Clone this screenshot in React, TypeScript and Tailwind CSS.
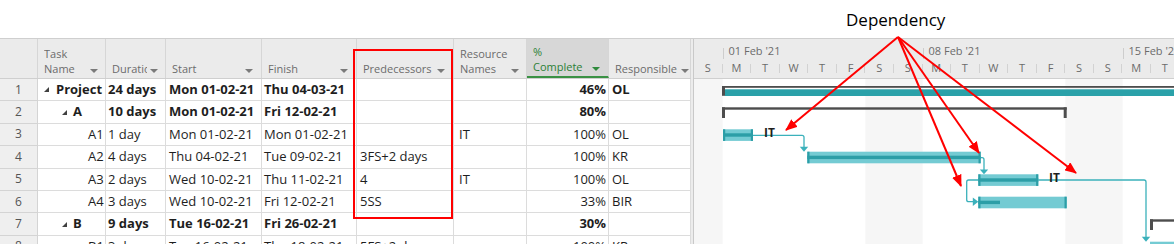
const cols = "grid grid-cols-[38px_68px_60px_96px_95px_97px_73px_82px_82px]";

type Task = {
  n: number;
  name: string;
  level: 0 | 1 | 2;
  dur: string;
  start: string;
  finish: string;
  pred: string;
  res: string;
  pct: string;
  resp: string;
};

const tasks: Task[] = [
  { n: 1, name: "Project", level: 0, dur: "24 days", start: "Mon 01-02-21", finish: "Thu 04-03-21", pred: "", res: "", pct: "46%", resp: "OL" },
  { n: 2, name: "A", level: 1, dur: "10 days", start: "Mon 01-02-21", finish: "Fri 12-02-21", pred: "", res: "", pct: "80%", resp: "" },
  { n: 3, name: "A1", level: 2, dur: "1 day", start: "Mon 01-02-21", finish: "Mon 01-02-21", pred: "", res: "IT", pct: "100%", resp: "OL" },
  { n: 4, name: "A2", level: 2, dur: "4 days", start: "Thu 04-02-21", finish: "Tue 09-02-21", pred: "3FS+2 days", res: "", pct: "100%", resp: "KR" },
  { n: 5, name: "A3", level: 2, dur: "2 days", start: "Wed 10-02-21", finish: "Thu 11-02-21", pred: "4", res: "IT", pct: "100%", resp: "OL" },
  { n: 6, name: "A4", level: 2, dur: "3 days", start: "Wed 10-02-21", finish: "Fri 12-02-21", pred: "5SS", res: "", pct: "33%", resp: "BIR" },
  { n: 7, name: "B", level: 1, dur: "9 days", start: "Tue 16-02-21", finish: "Fri 26-02-21", pred: "", res: "", pct: "30%", resp: "" },
  { n: 8, name: "B1", level: 2, dur: "3 days", start: "Tue 16-02-21", finish: "Thu 18-02-21", pred: "5FS+2 days", res: "", pct: "100%", resp: "KR" },
];

const days = ["S", "M", "T", "W", "T", "F", "S", "S", "M", "T", "W", "T", "F", "S", "S", "M", "T"];

function Caret({ green }: { green?: boolean }) {
  return (
    <svg width="8" height="4" viewBox="0 0 8 4" className="mb-[5px] shrink-0">
      <path d="M0 0H8L4 4Z" fill={green ? "#2f8a3c" : "#7a7a7a"} />
    </svg>
  );
}

function HeadCell({
  lines,
  active,
  mr = "mr-[7px]",
  gap = "mr-[3px]",
}: {
  lines: string[];
  active?: boolean;
  mr?: string;
  gap?: string;
}) {
  return (
    <div
      className={
        active
          ? "flex items-end border-r border-b-2 border-r-[#d6d6d6] border-b-[#3a9144] bg-[#d7d7d7] pl-[6px] text-[#2b8036]"
          : "flex items-end border-r border-[#d6d6d6] pl-[6px] text-[#6b6b6b]"
      }
    >
      <div className={`min-w-0 flex-1 overflow-hidden whitespace-nowrap pb-[2px] leading-[15px] ${gap}`}>
        {lines.map((l) => (
          <div key={l}>{l}</div>
        ))}
      </div>
      <div className={mr}>
        <Caret green={active} />
      </div>
    </div>
  );
}

function Expander() {
  return (
    <svg width="5" height="5" viewBox="0 0 5 5" className="shrink-0">
      <path d="M5 0V5H0Z" fill="#404040" />
    </svg>
  );
}

function TaskRow({ t }: { t: Task }) {
  const bold = t.level < 2;
  const cell = "flex items-center overflow-hidden whitespace-nowrap border-r border-b border-[#dcdcdc]";
  return (
    <div className={`${cols} h-[22.4px] text-[13px] text-[#1e1e1e] ${bold ? "font-bold" : ""}`}>
      <div className="flex items-center justify-center border-r border-b border-[#d4d4d4] bg-[#efefef] text-[12px] font-normal text-[#555]">
        {t.n}
      </div>
      <div className={`${cell} ${t.level === 0 ? "gap-[7px] pl-[6px]" : t.level === 1 ? "gap-[6px] pl-[24px]" : "pl-[50px]"}`}>
        {t.level < 2 && <Expander />}
        <span>{t.name}</span>
      </div>
      <div className={`${cell} pl-[2px]`}>{t.dur}</div>
      <div className={`${cell} pl-[3px]`}>{t.start}</div>
      <div className={`${cell} pl-[2px]`}>{t.finish}</div>
      <div className={`${cell} pl-[3px]`}>{t.pred}</div>
      <div className={`${cell} pl-[5px]`}>{t.res}</div>
      <div className={`${cell} justify-end pr-[2px]`}>{t.pct}</div>
      <div className={`${cell} pl-[3px]`}>{t.resp}</div>
    </div>
  );
}

const teal = "#74cbd3";
const tealDark = "#2c9ea7";
const link = "#3bb1bb";

function Bar({ x1, x2, y, progress }: { x1: number; x2: number; y: number; progress: number }) {
  const h = 11.6;
  return (
    <g>
      <rect x={x1} y={y} width={x2 - x1} height={h} fill={teal} />
      <rect x={x1} y={y + 4} width={progress - x1} height={3.4} fill={tealDark} />
      <rect x={x1} y={y} width={2.2} height={h} fill={tealDark} />
      <rect x={x2 - 2.2} y={y} width={2.2} height={h} fill={tealDark} />
    </g>
  );
}

function ChartBody() {
  return (
    <svg width="480" height="165" viewBox="0 0 480 165" className="block">
      <rect x="0" y="0" width="28.6" height="165" fill="#f6f6f6" />
      <rect x="171.4" y="0" width="57.2" height="165" fill="#f6f6f6" />
      <rect x="371.4" y="0" width="57.2" height="165" fill="#f6f6f6" />

      {/* Project summary */}
      <rect x="28" y="7" width="452" height="1.8" fill="#4d4d4d" />
      <rect x="28" y="7" width="3" height="9.8" fill="#4d4d4d" />
      <rect x="31" y="10.3" width="449" height="6.7" fill="#2aa1a9" />

      {/* A summary */}
      <rect x="28" y="28.3" width="344.7" height="2.4" fill="#4d4d4d" />
      <rect x="28" y="28.3" width="3" height="10.7" fill="#4d4d4d" />
      <rect x="369.7" y="28.3" width="3" height="10.7" fill="#4d4d4d" />

      {/* links */}
      <g fill="none" stroke={link} strokeWidth="1.3">
        <path d="M59 56.3H108Q110 56.3 110 58.3V68" />
        <path d="M286.7 78.7H288Q290 78.7 290 80.7V91" />
        <path d="M344.3 101H450Q452 101 452 103V158" />
        <path d="M284.3 101H274.7Q272.7 101 272.7 103V120.7Q272.7 122.7 274.7 122.7H279" />
      </g>
      <g fill={link}>
        <path d="M105.8 67.8H114.2L110 72.7Z" />
        <path d="M285.8 90.4H294.2L290 95.3Z" />
        <path d="M447.8 157.8H456.2L452 162.7Z" />
        <path d="M278.8 118.5V126.9L284.3 122.7Z" />
      </g>

      <Bar x1={29} x2={59} y={50.3} progress={59} />
      <Bar x1={113.3} x2={286.7} y={72.7} progress={286.7} />
      <Bar x1={284.3} x2={344.3} y={95.3} progress={344.3} />
      <Bar x1={284.3} x2={372.7} y={117.7} progress={306} />

      <text x="70" y="58" fontSize="12" fontWeight="700" fill="#1e1e1e" fontFamily="Open Sans, sans-serif">IT</text>
      <text x="355" y="103" fontSize="12" fontWeight="700" fill="#1e1e1e" fontFamily="Open Sans, sans-serif">IT</text>

      {/* B summary */}
      <rect x="456" y="140.3" width="24" height="2.4" fill="#4d4d4d" />
      <rect x="456" y="140.3" width="3" height="10.7" fill="#4d4d4d" />
      <rect x="456" y="162.7" width="24" height="3" fill={teal} />
    </svg>
  );
}

function ChartHeader() {
  const weeks = [
    { w: "w-[28.57px]", label: "" },
    { w: "w-[200px]", label: "01 Feb '21" },
    { w: "w-[200px]", label: "08 Feb '21" },
    { w: "w-[200px]", label: "15 Feb '21" },
  ];
  return (
    <div className="border-b border-[#cfcfcf] bg-[#ebebeb] text-[11px] text-[#6b6b6b]">
      <div className="flex h-[20px] items-end">
        {weeks.map((wk, i) => (
          <div key={i} className={`flex h-full shrink-0 items-end ${wk.w}`}>
            {i > 0 && <div className="h-[11px] w-px bg-[#cdcdcd]" />}
            <span className="whitespace-nowrap pl-[5px] leading-[16px]">{wk.label}</span>
          </div>
        ))}
      </div>
      <div className="flex h-[19px] items-center">
        {days.map((d, i) => (
          <div key={i} className="flex w-[28.57px] shrink-0 items-center">
            <span className="flex-1 text-center">{d}</span>
            <span className="h-[9px] w-px bg-[#d2d2d2]" />
          </div>
        ))}
      </div>
    </div>
  );
}

function Annotations() {
  const apex = { x: 898, y: 37 };
  const targets = [
    { x: 786, y: 130 },
    { x: 961, y: 186 },
    { x: 979, y: 153 },
    { x: 1076, y: 173 },
  ];
  return (
    <svg width="1174" height="244" className="pointer-events-none absolute left-0 top-0">
      <defs>
        <marker id="redhead" markerWidth="6" markerHeight="5" refX="5.5" refY="2.5" orient="auto" markerUnits="strokeWidth">
          <path d="M0 0L6 2.5L0 5Z" fill="#ff0000" />
        </marker>
      </defs>
      {targets.map((t, i) => (
        <line key={i} x1={apex.x} y1={apex.y} x2={t.x} y2={t.y} stroke="#ff0000" strokeWidth="2" markerEnd="url(#redhead)" />
      ))}
    </svg>
  );
}

export default function App() {
  return (
    <div className="relative h-[244px] w-[1174px] overflow-hidden bg-white font-['Open_Sans',sans-serif]">
      <div className="flex h-[38px] items-center">
        <span className="ml-[846px] text-[17px] leading-none text-black">Dependency</span>
      </div>

      <div className="flex border-t border-[#cfcfcf]">
        <div className="w-[691px] shrink-0">
          <div className={`${cols} h-[40px] border-b border-[#cfcfcf] bg-[#ebebeb] text-[11px]`}>
            <div className="border-r border-[#d6d6d6]" />
            <HeadCell lines={["Task", "Name"]} />
            <HeadCell lines={["Duration"]} mr="mr-[7px]" />
            <HeadCell lines={["Start"]} mr="mr-[8px]" />
            <HeadCell lines={["Finish"]} mr="mr-[8px]" />
            <HeadCell lines={["Predecessors"]} mr="mr-[8px]" />
            <HeadCell lines={["Resource", "Names"]} mr="mr-[7px]" />
            <HeadCell lines={["%", "Complete"]} active mr="mr-[8px]" />
            <HeadCell lines={["Responsible"]} mr="mr-[1px]" gap="mr-[2px]" />
          </div>
          {tasks.map((t) => (
            <TaskRow key={t.n} t={t} />
          ))}
        </div>

        <div className="w-[3px] shrink-0 border-r border-[#c9c9c9] bg-[#ececec]" />

        <div className="w-[480px] shrink-0 overflow-hidden">
          <ChartHeader />
          <ChartBody />
        </div>
      </div>

      <div className="pointer-events-none absolute left-[353px] top-[49px] h-[170px] w-[100px] border-2 border-[#ff0000]" />

      <Annotations />
    </div>
  );
}
